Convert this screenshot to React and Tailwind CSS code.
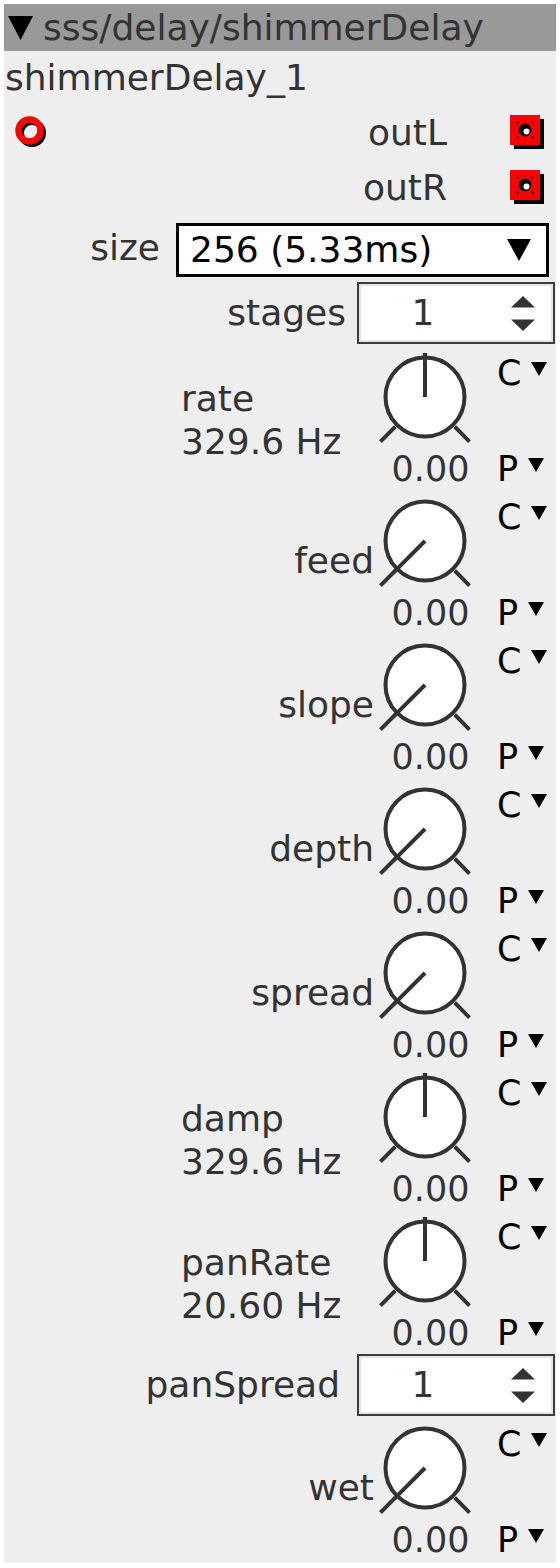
import React from 'react';

const knobs = [
  { name: 'rate', value: '329.6 Hz', mid: true },
  { name: 'feed' },
  { name: 'slope' },
  { name: 'depth' },
  { name: 'spread' },
  { name: 'damp', value: '329.6 Hz', mid: true },
  { name: 'panRate', value: '20.60 Hz', mid: true },
];

const Tri = ({ w = 16, h = 14, className = '' }) => (
  <svg width={w} height={h} viewBox={`0 0 ${w} ${h}`} className={className}>
    <path d={`M0 0 L${w} 0 L${w / 2} ${h} Z`} fill="#000" />
  </svg>
);

const InPort = () => (
  <svg width="38" height="38" viewBox="0 0 38 38">
    <circle cx="19" cy="19" r="11" fill="none" stroke="#000" strokeWidth="6" />
    <circle cx="16.5" cy="16.5" r="11" fill="none" stroke="#ff0000" strokeWidth="6.5" />
  </svg>
);

const OutPort = () => (
  <svg width="36" height="36" viewBox="0 0 36 36">
    <rect x="4" y="4" width="30" height="30" fill="#000" />
    <rect x="0" y="0" width="30" height="30" fill="#ff0000" />
    <circle cx="15" cy="15" r="6.5" fill="#000" />
    <circle cx="16.5" cy="16.5" r="3" fill="#fff" />
    <rect x="6.5" y="6.5" width="2" height="2" fill="#000" />
    <rect x="21.5" y="6.5" width="2" height="2" fill="#000" />
    <rect x="6.5" y="21.5" width="2" height="2" fill="#000" />
    <rect x="21.5" y="21.5" width="2" height="2" fill="#000" />
  </svg>
);

const Knob = ({ mid }) => {
  const c = 48, cy = 46, k = 0.7071;
  const px = mid ? c : c - 44 * k;
  const py = mid ? cy - 44 : cy + 44 * k;
  return (
    <svg width="96" height="96" viewBox="0 0 96 96">
      <line x1={c - 42 * k} y1={cy + 42 * k} x2={c - 63 * k} y2={cy + 63 * k} stroke="#333" strokeWidth="4" />
      <line x1={c + 42 * k} y1={cy + 42 * k} x2={c + 63 * k} y2={cy + 63 * k} stroke="#333" strokeWidth="4" />
      <circle cx={c} cy={cy} r="39.5" fill="#fff" stroke="#333" strokeWidth="4" />
      <line x1={c} y1={cy} x2={px} y2={py} stroke="#333" strokeWidth="4" />
    </svg>
  );
};

const Spinner = () => (
  <div className="w-[198px] h-[62px] border-2 border-[#3c3c3c] bg-[#e4e4e4] p-[2px]">
    <div className="h-full bg-white flex items-center">
      <div className="w-[124px] text-center text-[#333] leading-[40px]">1</div>
      <div className="flex-1 flex justify-center pl-[10px]">
        <svg width="24" height="35" viewBox="0 0 24 35">
          <path d="M0 11.5 L12 0 L24 11.5 Z" fill="#333" />
          <path d="M0 23.5 L24 23.5 L12 35 Z" fill="#333" />
        </svg>
      </div>
    </div>
  </div>
);

const KnobRow = ({ name, value, mid }) => (
  <div className="flex justify-end h-[144px] shrink-0">
    {/* label column */}
    {value ? (
      <div className="w-[196px] pt-[28px] text-[#333] leading-[43px]">
        <div>{name}</div>
        <div>{value}</div>
      </div>
    ) : (
      <div className="w-[196px] pt-[48px] pr-[3px] text-right text-[#333] leading-[40px]">{name}</div>
    )}

    {/* knob + value */}
    <div className="w-[96px] pt-[2px] flex flex-col items-center">
      <Knob mid={mid} />
      <div className="mt-[4px] pl-[11px] text-[35px] leading-[36px] text-[#333]">0.00</div>
    </div>

    {/* C / P selectors */}
    <div className="w-[64px] ml-[19px] pl-[5px] pt-[6px] text-[35px] text-black">
      <div className="flex h-[36px]">
        <span className="leading-[36px]">C</span>
        <Tri className="mt-[7px] ml-[10px]" />
      </div>
      <div className="flex h-[36px] mt-[60px]">
        <span className="leading-[36px]">P</span>
        <Tri className="mt-[7px] ml-[10px]" />
      </div>
    </div>
  </div>
);

const App = () => {
  return (
    <div className="w-[560px] h-[1568px] bg-white pt-[4px] px-[4px] font-['DejaVu_Sans',sans-serif] text-[36px]">
      <div className="w-[552px] h-[1559px] bg-[#eeeeee] flex flex-col">

        {/* Title bar */}
        <div className="h-[47px] shrink-0 bg-[#999999] flex items-center pl-[4px] text-[#333]">
          <Tri w={25} h={24} className="mr-[10px]" />
          <span className="leading-[47px]">sss/delay/shimmerDelay</span>
        </div>

        <div className="h-[54px] shrink-0 flex items-center pl-[1px] text-[#333]">shimmerDelay_1</div>

        {/* Ports */}
        <div className="h-[55px] shrink-0 flex items-center pl-[9px] pr-[10px] text-[#333]">
          <InPort />
          <div className="flex-1" />
          <span className="mr-[63px]">outL</span>
          <OutPort />
        </div>
        <div className="h-[55px] shrink-0 flex items-center justify-end pr-[10px] text-[#333]">
          <span className="mr-[63px]">outR</span>
          <OutPort />
        </div>

        {/* size dropdown */}
        <div className="flex shrink-0 justify-end items-center h-[62px] pt-[8px] pr-[7px]">
          <span className="mr-[16px] text-[#333] -mt-[4px]">size</span>
          <div className="w-[373px] h-[54px] border-[3px] border-black bg-white flex items-center justify-between pl-[11px] pr-[15px] text-black">
            <span className="leading-[40px]">256 (5.33ms)</span>
            <Tri w={24} h={22} />
          </div>
        </div>

        {/* stages */}
        <div className="flex shrink-0 justify-end items-center h-[62px] mt-[5px] pr-[1px]">
          <span className="mr-[11px] text-[#333]">stages</span>
          <Spinner />
        </div>

        <div className="mt-[5px] shrink-0 flex flex-col">
          {knobs.map((k) => (
            <KnobRow key={k.name} {...k} />
          ))}
        </div>

        {/* panSpread */}
        <div className="flex shrink-0 justify-end items-center h-[62px] -mt-[3px] pr-[1px]">
          <span className="mr-[17px] text-[#333]">panSpread</span>
          <Spinner />
        </div>

        <div className="mt-[4px] shrink-0">
          <KnobRow name="wet" />
        </div>
      </div>
    </div>
  );
};

export default App;
